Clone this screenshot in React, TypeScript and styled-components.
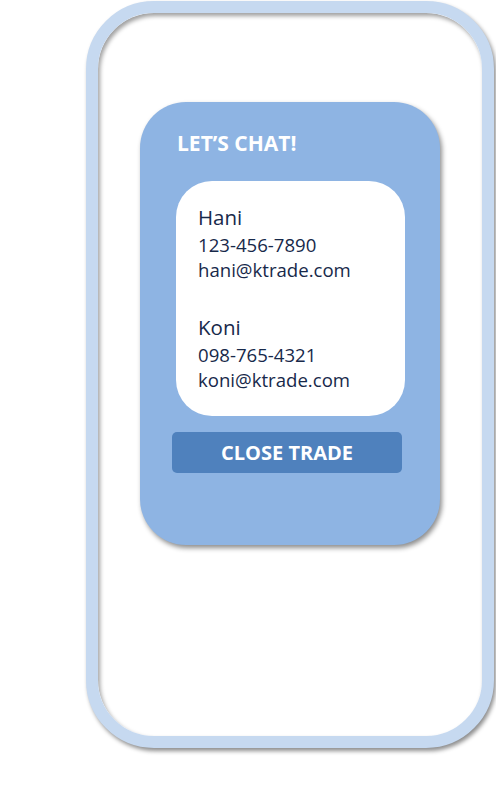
import React from "react";
import styled, { createGlobalStyle } from "styled-components";

const GlobalStyle = createGlobalStyle`
  html, body {
    margin: 0;
    padding: 0;
    background: #ffffff;
  }
  body {
    font-family: "Open Sans", "Noto Sans", "Liberation Sans", sans-serif;
  }
`;

const Page = styled.div`
  width: 496px;
  height: 800px;
  padding: 1px 0 0 86px;
  box-sizing: border-box;
  overflow: hidden;
`;

const Phone = styled.div`
  width: 408px;
  height: 747px;
  box-sizing: border-box;
  border: 12px solid #c6d9f0;
  border-radius: 68px;
  background: #ffffff;
  box-shadow: 2px 3px 4px rgba(0, 0, 0, 0.45),
    inset 2px 3px 4px rgba(0, 0, 0, 0.38);
  padding: 89px 0 0 42px;
`;

const Card = styled.div`
  width: 300px;
  height: 443px;
  box-sizing: border-box;
  background: #8eb4e3;
  border-radius: 46px;
  box-shadow: 2px 3px 5px rgba(0, 0, 0, 0.45);
  padding: 31px 36px 0 36px;
  display: flex;
  flex-direction: column;
`;

const Title = styled.div`
  color: #ffffff;
  font-weight: 700;
  font-size: 21px;
  line-height: 20px;
  padding-left: 1px;
  letter-spacing: 0px;
`;

const ContactBox = styled.div`
  margin-top: 28px;
  width: 229px;
  height: 235px;
  box-sizing: border-box;
  background: #ffffff;
  border-radius: 36px;
  padding: 23px 0 0 22px;
  display: flex;
  flex-direction: column;
  gap: 32px;
`;

const Contact = styled.div`
  display: flex;
  flex-direction: column;
  color: #17294a;
`;

const Name = styled.div`
  font-size: 20.5px;
  line-height: 27.8px;
`;

const Detail = styled.div`
  font-size: 18.6px;
  line-height: 25px;
  letter-spacing: 0px;
`;

const CloseButton = styled.button`
  margin-top: 16px;
  margin-left: -4px;
  width: 230px;
  height: 41px;
  border: none;
  border-radius: 5px;
  background: #4f81bd;
  color: #ffffff;
  font-family: "Open Sans", "Noto Sans", "Liberation Sans", sans-serif;
  font-weight: 700;
  font-size: 20px;
  letter-spacing: 0px;
  padding: 0;
  display: flex;
  align-items: center;
  justify-content: center;
`;

const contacts = [
  { name: "Hani", phone: "123-456-7890", email: "hani@ktrade.com" },
  { name: "Koni", phone: "098-765-4321", email: "koni@ktrade.com" },
];

export default function App() {
  return (
    <>
      <GlobalStyle />
      <Page>
        <Phone>
          <Card>
            <Title>LET’S CHAT!</Title>
            <ContactBox>
              {contacts.map((c) => (
                <Contact key={c.name}>
                  <Name>{c.name}</Name>
                  <Detail>{c.phone}</Detail>
                  <Detail>{c.email}</Detail>
                </Contact>
              ))}
            </ContactBox>
            <CloseButton>CLOSE TRADE</CloseButton>
          </Card>
        </Phone>
      </Page>
    </>
  );
}
